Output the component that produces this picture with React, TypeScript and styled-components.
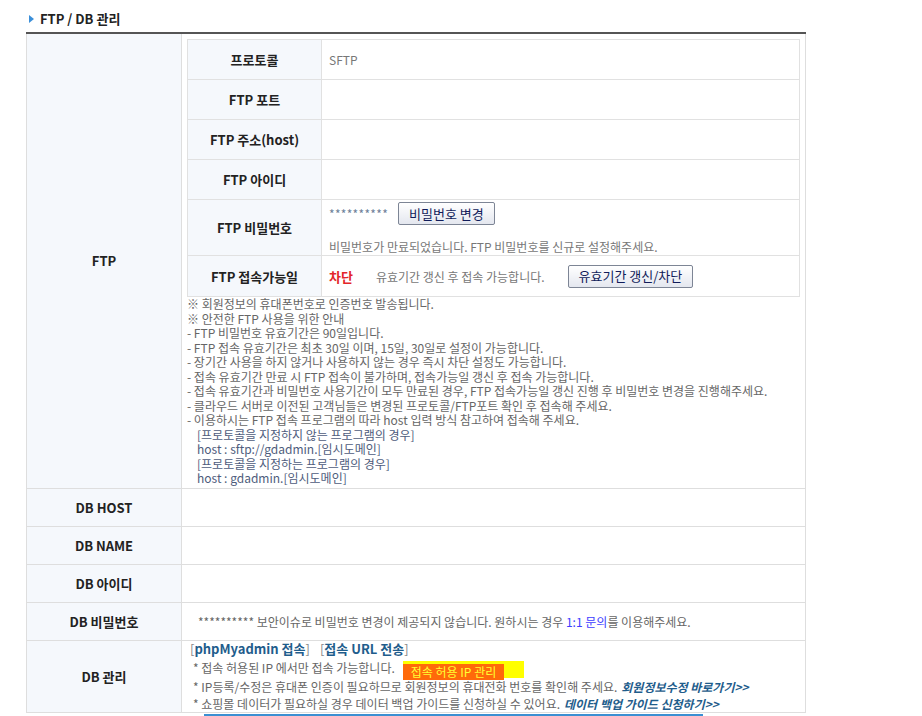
import React from 'react'
import styled, { createGlobalStyle } from 'styled-components'

const GlobalStyle = createGlobalStyle`
  body {
    margin: 0;
    background: #fff;
    font-family: 'Noto Sans CJK KR', 'Noto Sans', sans-serif;
    color: #333;
  }
`

const Page = styled.div`
  padding: 9px 0 0 26px;
  width: 780px;
`

const SectionTitle = styled.h2`
  display: flex;
  align-items: center;
  gap: 6px;
  margin: 0 0 4px 3px;
  height: 19px;
  font-size: 13px;
  font-weight: bold;
  color: #222;
`

const OuterTable = styled.table`
  width: 780px;
  border-collapse: collapse;
  border-top: 2px solid #555;
  table-layout: fixed;
`

const OuterHead = styled.th`
  width: 154px;
  background: #f5f8fc;
  border: 1px solid #dedede;
  border-top: none;
  font-size: 13px;
  font-weight: bold;
  color: #222;
  text-align: center;
  padding: 0;
`

const OuterCell = styled.td<{ $h?: number; $pad?: string }>`
  height: ${({ $h }) => ($h ? `${$h}px` : 'auto')};
  border: 1px solid #dedede;
  border-top: none;
  padding: ${({ $pad }) => $pad || '0'};
  font-size: 12px;
  color: #666;
  vertical-align: middle;
`

const InnerTable = styled.table`
  width: 613px;
  border-collapse: collapse;
  table-layout: fixed;
`

const InnerHead = styled.th<{ $h: number }>`
  width: 133px;
  height: ${({ $h }) => $h - 1}px;
  background: #f5f8fc;
  border: 1px solid #e1e1e1;
  font-size: 13px;
  font-weight: bold;
  color: #222;
  text-align: center;
  padding: 0;
`

const InnerCell = styled.td`
  border: 1px solid #e1e1e1;
  padding: 0 7px;
  font-size: 12px;
  color: #777;
  vertical-align: middle;
`

const Stack = styled.div`
  display: flex;
  flex-direction: column;
  gap: 13px;
  padding-top: 2px;
`

const Inline = styled.div<{ $gap?: number }>`
  display: flex;
  align-items: center;
  gap: ${({ $gap }) => $gap ?? 10}px;
`

const Masked = styled.span`
  color: #6d7f99;
  font-size: 12px;
  letter-spacing: 0.3px;
`

const Button = styled.button`
  height: 23px;
  padding: 0 10px;
  border: 1px solid #7d8595;
  border-radius: 2px;
  background: linear-gradient(#ffffff, #e4e7ef);
  color: #111c5a;
  font-family: 'Noto Sans CJK KR', sans-serif;
  font-size: 13px;
  line-height: 20px;
  cursor: pointer;
`

const Blocked = styled.strong`
  color: #e3262a;
  font-size: 13px;
`

const Notes = styled.ul`
  list-style: none;
  margin: 0;
  padding: 0;
  font-size: 12px;
  line-height: 14.5px;
  color: #666;
`

const Note = styled.li<{ $indent?: boolean; $tone?: 'host' }>`
  padding-left: ${({ $indent }) => ($indent ? 10 : 0)}px;
  color: ${({ $tone }) => ($tone === 'host' ? '#4e5c7c' : '#666')};
`

const Link11 = styled.span`
  color: #3d3dff;
`

const LinkRow = styled.div`
  display: flex;
  gap: 10px;
  font-size: 13px;
  line-height: 15px;
  margin-bottom: 3px;
`

const Bracket = styled.span`
  color: #888;
  b {
    color: #1f5d8c;
  }
`

const Bullet = styled.div`
  font-size: 12px;
  line-height: 17px;
  color: #666;
  padding-left: 3px;
  white-space: nowrap;
`

const Highlight = styled.span`
  display: inline-block;
  margin-left: 8px;
  padding-right: 20px;
  background: #ffff00;
  vertical-align: middle;
`

const Badge = styled.span`
  display: inline-block;
  position: relative;
  top: 2px;
  padding: 0 8px;
  background: #ff6a0a;
  color: #ffff33;
  font-size: 12px;
  line-height: 16px;
`

const GoLink = styled.b`
  color: #1f5d8c;
  font-style: italic;
  margin-left: 4px;
`

const Popup = styled.div`
  margin-left: 178px;
  margin-top: 1px;
  width: 499px;
  height: 4px;
  border-top: 2px solid #3b8fd2;
  background: linear-gradient(to right, #fff 0, #fff 93%, #3b8fd2 93%);
`

function TitleArrow() {
  return (
    <svg width="5" height="8" viewBox="0 0 5 8">
      <path d="M0 0 L5 4 L0 8 Z" fill="#3b8fd9" />
    </svg>
  )
}

const notes: { text: React.ReactNode; indent?: boolean; tone?: 'host' }[] = [
  { text: '※ 회원정보의 휴대폰번호로 인증번호 발송됩니다.' },
  { text: '※ 안전한 FTP 사용을 위한 안내' },
  { text: '- FTP 비밀번호 유효기간은 90일입니다.' },
  { text: '- FTP 접속 유효기간은 최초 30일 이며, 15일, 30일로 설정이 가능합니다.' },
  { text: '- 장기간 사용을 하지 않거나 사용하지 않는 경우 즉시 차단 설정도 가능합니다.' },
  { text: '- 접속 유효기간 만료 시 FTP 접속이 불가하며, 접속가능일 갱신 후 접속 가능합니다.' },
  { text: '- 접속 유효기간과 비밀번호 사용기간이 모두 만료된 경우, FTP 접속가능일 갱신 진행 후 비밀번호 변경을 진행해주세요.' },
  { text: '- 클라우드 서버로 이전된 고객님들은 변경된 프로토콜/FTP포트 확인 후 접속해 주세요.' },
  { text: '- 이용하시는 FTP 접속 프로그램의 따라 host 입력 방식 참고하여 접속해 주세요.' },
  { text: '[프로토콜을 지정하지 않는 프로그램의 경우]', indent: true, tone: 'host' },
  { text: 'host : sftp://gdadmin.[임시도메인]', indent: true, tone: 'host' },
  { text: '[프로토콜을 지정하는 프로그램의 경우]', indent: true, tone: 'host' },
  { text: 'host : gdadmin.[임시도메인]', indent: true, tone: 'host' }
]

export default function App() {
  return (
    <>
      <GlobalStyle />
      <Page>
        <SectionTitle>
          <TitleArrow />
          FTP / DB 관리
        </SectionTitle>
        <OuterTable>
          <tbody>
            <tr>
              <OuterHead>FTP</OuterHead>
              <OuterCell $pad="5px 6px 2px 5px">
                <InnerTable>
                  <tbody>
                    <tr>
                      <InnerHead $h={40}>프로토콜</InnerHead>
                      <InnerCell>SFTP</InnerCell>
                    </tr>
                    <tr>
                      <InnerHead $h={40}>FTP 포트</InnerHead>
                      <InnerCell />
                    </tr>
                    <tr>
                      <InnerHead $h={40}>FTP 주소(host)</InnerHead>
                      <InnerCell />
                    </tr>
                    <tr>
                      <InnerHead $h={40}>FTP 아이디</InnerHead>
                      <InnerCell />
                    </tr>
                    <tr>
                      <InnerHead $h={56}>FTP 비밀번호</InnerHead>
                      <InnerCell>
                        <Stack>
                          <Inline>
                            <Masked>**********</Masked>
                            <Button>비밀번호 변경</Button>
                          </Inline>
                          <span>비밀번호가 만료되었습니다. FTP 비밀번호를 신규로 설정해주세요.</span>
                        </Stack>
                      </InnerCell>
                    </tr>
                    <tr>
                      <InnerHead $h={41}>FTP 접속가능일</InnerHead>
                      <InnerCell>
                        <Inline $gap={23}>
                          <Blocked>차단</Blocked>
                          <span>유효기간 갱신 후 접속 가능합니다.</span>
                          <Button>유효기간 갱신/차단</Button>
                        </Inline>
                      </InnerCell>
                    </tr>
                  </tbody>
                </InnerTable>
                <Notes>
                  {notes.map((n, i) => (
                    <Note key={i} $indent={n.indent} $tone={n.tone}>
                      {n.text}
                    </Note>
                  ))}
                </Notes>
              </OuterCell>
            </tr>
            <tr>
              <OuterHead>DB HOST</OuterHead>
              <OuterCell $h={37} />
            </tr>
            <tr>
              <OuterHead>DB NAME</OuterHead>
              <OuterCell $h={37} />
            </tr>
            <tr>
              <OuterHead>DB 아이디</OuterHead>
              <OuterCell $h={37} />
            </tr>
            <tr>
              <OuterHead>DB 비밀번호</OuterHead>
              <OuterCell $h={37} $pad="0 0 0 16px">
                ********** 보안이슈로 비밀번호 변경이 제공되지 않습니다. 원하시는 경우 <Link11>1:1 문의</Link11>를 이용해주세요.
              </OuterCell>
            </tr>
            <tr>
              <OuterHead>DB 관리</OuterHead>
              <OuterCell $h={70} $pad="0 0 0 8px">
                <LinkRow>
                  <Bracket>
                    [<b>phpMyadmin 접속</b>]
                  </Bracket>
                  <Bracket>
                    [<b>접속 URL 전송</b>]
                  </Bracket>
                </LinkRow>
                <Bullet>
                  * 접속 허용된 IP 에서만 접속 가능합니다.
                  <Highlight>
                    <Badge>접속 허용 IP 관리</Badge>
                  </Highlight>
                </Bullet>
                <Bullet>
                  * IP등록/수정은 휴대폰 인증이 필요하므로 회원정보의 휴대전화 번호를 확인해 주세요.
                  <GoLink>회원정보수정 바로가기&gt;&gt;</GoLink>
                </Bullet>
                <Bullet>
                  * 쇼핑몰 데이터가 필요하실 경우 데이터 백업 가이드를 신청하실 수 있어요.
                  <GoLink>데이터 백업 가이드 신청하기&gt;&gt;</GoLink>
                </Bullet>
              </OuterCell>
            </tr>
          </tbody>
        </OuterTable>
        <Popup />
      </Page>
    </>
  )
}
